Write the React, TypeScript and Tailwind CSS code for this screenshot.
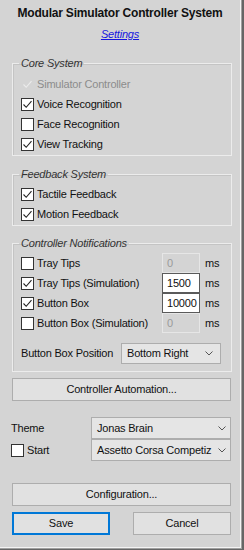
import React from "react";

const Check = ({ color = "#222" }: { color?: string }) => (
  <svg width="11" height="11" viewBox="0 0 11 11" className="block">
    <path d="M1.5 5.5 L4.2 8.3 L9.5 2.2" fill="none" stroke={color} strokeWidth="1.1" />
  </svg>
);

const Box = ({ checked, disabled }: { checked?: boolean; disabled?: boolean }) => (
  <span
    className={
      "flex w-[13px] h-[13px] shrink-0 items-center justify-center border " +
      (disabled ? "border-transparent bg-transparent" : "border-[#333] bg-white")
    }
  >
    {checked && <Check color={disabled ? "#ececec" : "#222"} />}
  </span>
);

const Chevron = () => (
  <svg width="8" height="5" viewBox="0 0 8 5" className="block">
    <path d="M0.5 0.5 L4 4 L7.5 0.5" fill="none" stroke="#555" strokeWidth="1" />
  </svg>
);

const CheckRow = ({ label, checked, disabled }: { label: string; checked?: boolean; disabled?: boolean }) => (
  <div className="flex h-[20px] items-center gap-[3px]">
    <Box checked={checked} disabled={disabled} />
    <span className={disabled ? "text-[#8c8c8c]" : ""}>{label}</span>
  </div>
);

const Group = ({ title, className, children }: { title: string; className?: string; children: React.ReactNode }) => (
  <fieldset
    className={
      "ml-[12px] w-[220px] border border-[#ececec] pl-[8px] shadow-[inset_1px_1px_0_#c4c4c4] " + (className ?? "")
    }
  >
    <legend className="-ml-[2px] px-[2px] italic leading-[14px] text-[#333]">{title}</legend>
    {children}
  </fieldset>
);

const Select = ({ value, className }: { value: string; className?: string }) => (
  <div
    className={
      "flex items-center border border-[#adadad] bg-[#e5e5e5] pl-[5px] pr-[4px] " + (className ?? "")
    }
  >
    <span className="flex-1 whitespace-nowrap">{value}</span>
    <Chevron />
  </div>
);

const Button = ({ label, className, primary }: { label: string; className?: string; primary?: boolean }) => (
  <div
    className={
      "flex h-[23px] items-center justify-center bg-[#e1e1e1] " +
      (primary ? "border-2 border-[#0078d7] " : "border border-[#adadad] ") +
      (className ?? "")
    }
  >
    {label}
  </div>
);

const notifications = [
  { label: "Tray Tips", checked: false, value: "0" },
  { label: "Tray Tips (Simulation)", checked: true, value: "1500" },
  { label: "Button Box", checked: true, value: "10000" },
  { label: "Button Box (Simulation)", checked: false, value: "0" },
];

export default function App() {
  return (
    <div className="h-[550px] w-[244px] bg-[#666] font-['Liberation_Sans',Arial,sans-serif] text-[11px] tracking-[-0.2px] text-[#111]">
      <div className="h-[549px] w-[242px] bg-[#a0a0a0]">
        <div className="flex h-[548px] w-[241px] flex-col border-b border-r border-[#f4f4f4] bg-[#d4d4d4]">
          <div className="pt-[5px] text-center text-[12px] font-bold leading-[16px]">
            Modular Simulator Controller System
          </div>
          <div className="mt-[6px] text-center italic leading-[14px] text-[#1515e0] underline">Settings</div>

          <Group title="Core System" className="mt-[15px] pb-[1px]">
            <div className="pt-[4px]">
              <CheckRow label="Simulator Controller" checked disabled />
              <CheckRow label="Voice Recognition" checked />
              <CheckRow label="Face Recognition" />
              <CheckRow label="View Tracking" checked />
            </div>
          </Group>

          <Group title="Feedback System" className="mt-[11px] pb-[1px]">
            <div className="pt-[3px]">
              <CheckRow label="Tactile Feedback" checked />
              <CheckRow label="Motion Feedback" checked />
            </div>
          </Group>

          <Group title="Controller Notifications" className="mt-[10px] pb-[7px]">
            <div className="pt-[3px]">
              {notifications.map((n) => (
                <div key={n.label} className="flex h-[20px] items-center">
                  <div className="flex w-[141px] items-center gap-[3px]">
                    <Box checked={n.checked} />
                    <span>{n.label}</span>
                  </div>
                  <div
                    className={
                      "flex h-[20px] w-[38px] items-center pl-[4px] " +
                      (n.checked
                        ? "border border-[#5a5a5a] bg-white"
                        : "border border-[#e6e6e6] text-[#9a9a9a]")
                    }
                  >
                    {n.checked ? n.value : "0"}
                  </div>
                  <span className="ml-[5px]">ms</span>
                </div>
              ))}
              <div className="mt-[10px] flex h-[21px] items-center">
                <span className="w-[100px]">Button Box Position</span>
                <Select value="Bottom Right" className="h-[21px] w-[100px] pr-[7px]" />
              </div>
            </div>
          </Group>

          <Button label="Controller Automation..." className="ml-[12px] mt-[6px] w-[219px]" />

          <div className="ml-[11px] mt-[16px] flex h-[22px] items-center">
            <span className="w-[80px]">Theme</span>
            <Select value="Jonas Brain" className="h-[22px] w-[140px]" />
          </div>
          <div className="ml-[11px] flex h-[22px] items-center">
            <div className="flex w-[80px] items-center gap-[3px]">
              <Box />
              <span>Start</span>
            </div>
            <Select value="Assetto Corsa Competiz" className="h-[22px] w-[140px]" />
          </div>

          <Button label="Configuration..." className="ml-[12px] mt-[22px] w-[219px]" />

          <div className="ml-[12px] mt-[6px] flex w-[219px] justify-between">
            <Button label="Save" primary className="w-[98px]" />
            <Button label="Cancel" className="w-[98px]" />
          </div>
        </div>
      </div>
    </div>
  );
}
